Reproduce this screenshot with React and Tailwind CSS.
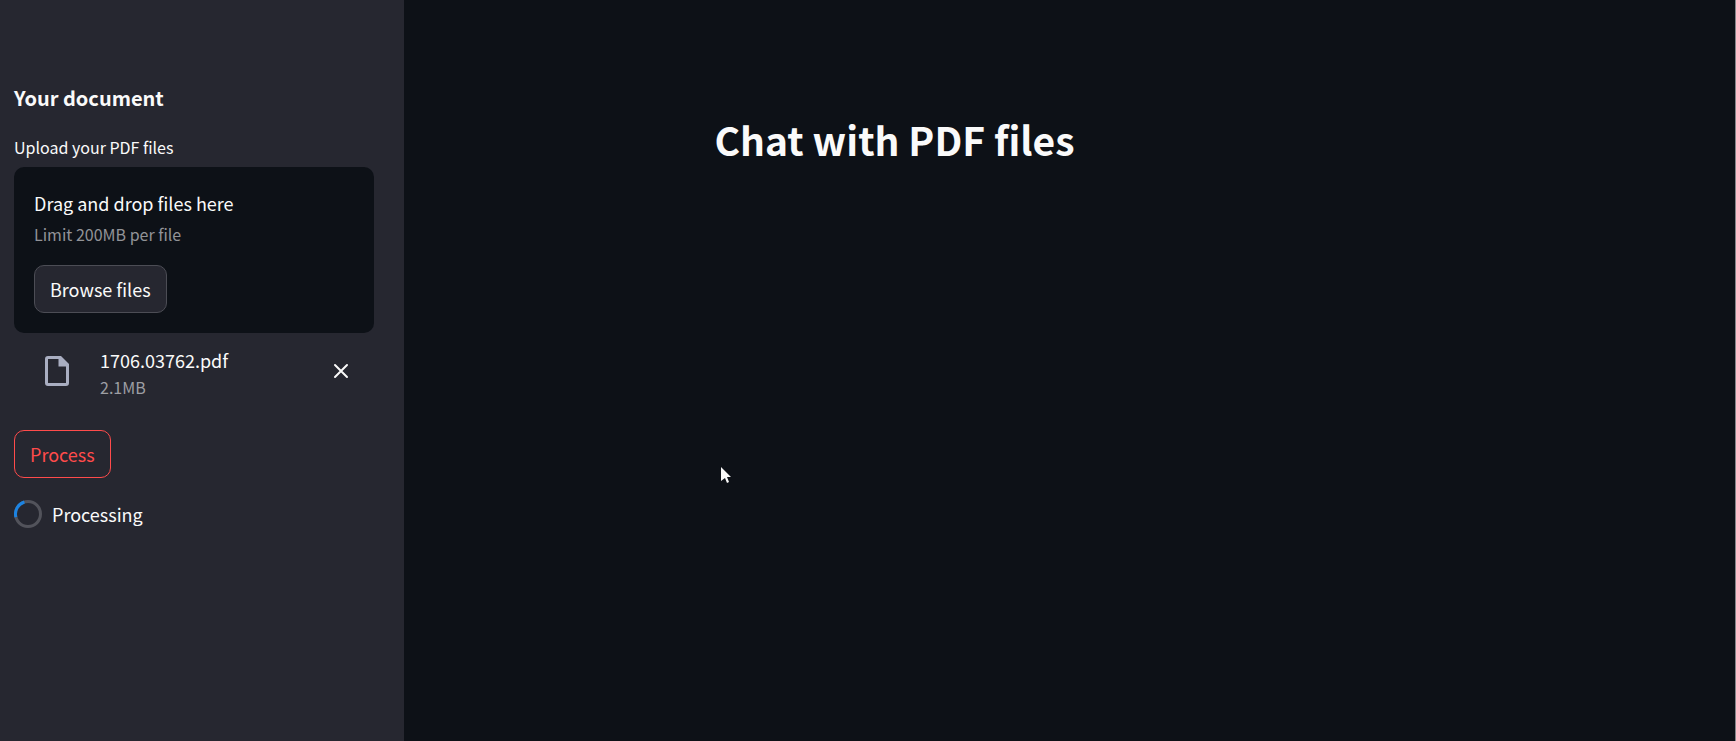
function FileIcon() {
  return (
    <svg viewBox="0 0 24 30" className="h-[30px] w-6" fill="#a9aec1" aria-hidden="true">
      <path
        fillRule="evenodd"
        d="M3 0H16L24 8V27C24 29 23 30 21 30H3C1 30 0 29 0 27V3C0 1 1 0 3 0ZM3 3V27H21V10.500H13.500V3Z"
      />
    </svg>
  );
}

function Spinner() {
  return (
    <svg viewBox="0 0 28 28" className="size-7" fill="none" strokeWidth="3" aria-hidden="true">
      <circle cx="14" cy="14" r="12.500" stroke="#52535b" />
      <path d="M1.900 17.200A12.500 12.500 0 0 1 10.400 2" stroke="#1c83e1" />
    </svg>
  );
}

function Pointer() {
  return (
    <svg
      viewBox="0 0 10 16"
      className="absolute top-[467px] left-[721px] h-4 w-[10px]"
      fill="#fafafa"
      aria-hidden="true"
    >
      <path d="M0 0L10 10H6L8 15L6 16L4 11L0 14Z" />
    </svg>
  );
}

function Sidebar() {
  return (
    <aside className="w-[404px] shrink-0 bg-[#262730] pt-[83px] pr-[30px] pl-[14px]">
      <h2 className="text-[20px] leading-[30px] font-bold">Your document</h2>
      <label htmlFor="pdf-upload" className="mt-[22px] block text-[16px] leading-6">
        Upload your PDF files
      </label>
      <section className="mt-2 rounded-[10px] bg-[#0d1117] p-5">
        <p className="text-[18px] leading-8">Drag and drop files here</p>
        <p className="text-[16px] leading-[30px] text-[#929397]">Limit 200MB per file</p>
        <button
          id="pdf-upload"
          type="button"
          className="mt-4 h-12 rounded-[10px] border border-[#4c4d55] bg-[#262730] px-[15px] text-[18px]"
        >
          Browse files
        </button>
      </section>
      <div className="flex items-center pt-[11px] pr-[23px] pl-[31px]">
        <FileIcon />
        <div className="ml-[31px] grow">
          <p className="text-[18px] leading-8">1706.03762.pdf</p>
          <p className="text-[16px] leading-[22px] text-[#9d9ea3]">2.1MB</p>
        </div>
        <button type="button" aria-label="Remove file" className="flex size-5 items-center justify-center">
          <svg viewBox="0 0 16 16" className="size-4" stroke="#fafafa" strokeWidth="2" strokeLinecap="round" aria-hidden="true">
            <path d="M2 2L14 14M14 2L2 14" />
          </svg>
        </button>
      </div>
      <button
        type="button"
        className="mt-8 block h-12 rounded-[10px] border border-[#ff4b4b] px-[15px] text-[18px] text-[#ff4b4b]"
      >
        Process
      </button>
      <div className="mt-5 flex items-center gap-[10px]" role="status">
        <Spinner />
        <p className="text-[18px] leading-8">Processing</p>
      </div>
    </aside>
  );
}

export default function App() {
  return (
    <div className="relative flex min-h-screen border-r border-[#85868a] bg-[#0d1117] font-['Noto_Sans_CJK_SC',sans-serif] text-[#fafafa]">
      <Sidebar />
      <main className="grow px-5 pt-[106px]">
        <h1 className="mx-auto max-w-[710px] text-[39px] leading-[66px] font-bold">
          Chat with PDF files
        </h1>
      </main>
      <Pointer />
    </div>
  );
}
